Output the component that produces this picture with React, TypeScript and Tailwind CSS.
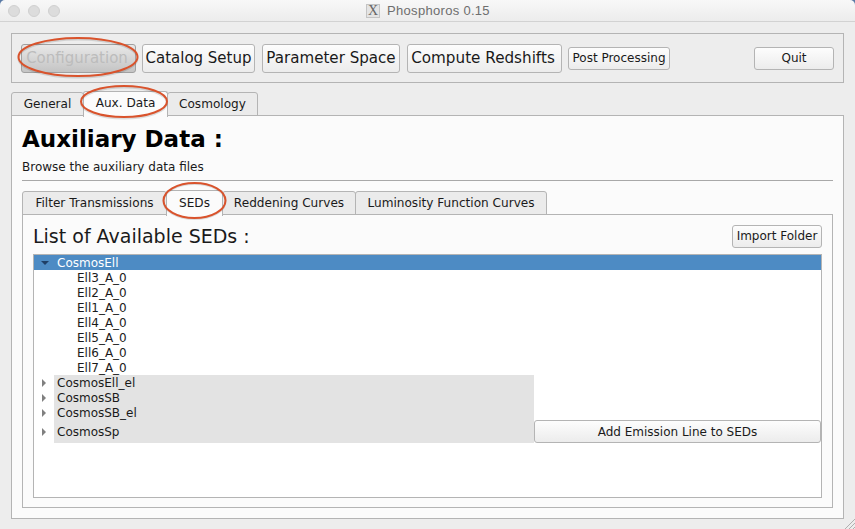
const btn = "flex items-center justify-center rounded-[3px] border border-[#b4b4b4] bg-gradient-to-b from-[#fdfdfd] to-[#ececec] text-[#1a1a1a] whitespace-nowrap";
const font = { fontFamily: '"DejaVu Sans", sans-serif' };

function Tab({ label, w, active, first, inner }: { label: string; w: number; active?: boolean; first?: boolean; inner?: boolean }) {
  return (
    <div
      style={{ width: w }}
      className={
        "flex items-center justify-center rounded-t-[3px] border border-[#b4b4b4] text-[12.1px] text-[#1a1a1a] whitespace-nowrap " +
        (active
          ? "relative z-10 -mb-px h-[26px] -mt-[2px] border-b-0 bg-[#fbfbfb] " + (inner ? "pb-[1px]" : "pb-[2px]")
          : "h-[24px] bg-[#ebebeb] " + (inner ? "pt-[1px]" : "")) +
        (first ? "" : " -ml-px")
      }
    >
      {label}
    </div>
  );
}

function Arrow({ open }: { open?: boolean }) {
  return (
    <svg width="8" height="8" viewBox="0 0 8 8" className="shrink-0">
      {open ? (
        <path d="M0 2 H8 L4 6 Z" fill="#1f3f66" />
      ) : (
        <path d="M2 0 L6 4 L2 8 Z" fill="#808080" />
      )}
    </svg>
  );
}

function Row({ label, h = 15, btnRow }: { label: string; h?: number; btnRow?: boolean }) {
  return (
    <div className="flex items-center" style={{ height: h }}>
      <div className="flex w-[20px] justify-end pr-[6px]"><Arrow /></div>
      <div className="flex h-full w-[480px] items-center bg-[#e3e3e3] pl-[3px]">{label}</div>
      {btnRow && <div className={btn + " h-full w-[287px]"}>Add Emission Line to SEDs</div>}
    </div>
  );
}

export default function App() {
  const children = ["Ell3_A_0", "Ell2_A_0", "Ell1_A_0", "Ell4_A_0", "Ell5_A_0", "Ell6_A_0", "Ell7_A_0"];
  return (
    <div style={font} className="relative flex h-[529px] w-[855px] flex-col overflow-hidden bg-[#5a7aa5] text-[12px] text-[#1a1a1a]">
      {/* title bar */}
      <div className="relative flex h-[22px] shrink-0 items-center justify-center rounded-t-[5px] border-b border-[#d2d2d2] bg-gradient-to-b from-[#f8f8f8] to-[#ececec]">
        <div className="absolute left-[8px] top-[5px] flex gap-[8px]">
          <div className="h-[12px] w-[12px] rounded-full border border-[#d0d0d0] bg-[#dcdcdc]" />
          <div className="h-[12px] w-[12px] rounded-full border border-[#d0d0d0] bg-[#dcdcdc]" />
          <div className="h-[12px] w-[12px] rounded-full border border-[#d0d0d0] bg-[#dcdcdc]" />
        </div>
        <div className="ml-[1px] flex items-center gap-[7px] pt-[1px]">
          <div style={{ fontFamily: '"Liberation Serif", serif' }} className="flex h-[14px] w-[14px] items-center justify-center border border-[#c4c4c4] bg-[#e4e4e4] text-[14px] leading-none text-[#666]">X</div>
          <span style={{ fontFamily: '"Liberation Sans", sans-serif' }} className="text-[13px] tracking-[0.3px] text-[#6e6e6e]">Phosphoros 0.15</span>
        </div>
      </div>

      <div className="flex flex-1 flex-col bg-[#ededed] px-[11px] pt-[11px]">
        {/* toolbar */}
        <div className="flex h-[50px] shrink-0 items-center border border-[#b4b4b4] pl-[9px] pr-[9px]">
          <div className="flex h-[29px] w-[115px] items-center justify-center rounded-[3px] border border-[#a0a0a0] bg-gradient-to-b from-[#e8e8e8] to-[#c4c4c4] pr-[3px] text-[15px] text-[#bcbcbc]">Configuration</div>
          <div className={btn + " ml-[6px] h-[29px] w-[113px] text-[15px]"}>Catalog Setup</div>
          <div className={btn + " ml-[7px] h-[29px] w-[138px] text-[15.1px]"}>Parameter Space</div>
          <div className={btn + " ml-[7px] h-[29px] w-[155px] pr-[3px] text-[15.2px]"}>Compute Redshifts</div>
          <div className={btn + " ml-[6px] h-[23px] w-[102px] text-[12px]"}>Post Processing</div>
          <div className={btn + " ml-auto h-[23px] w-[80px] text-[12px]"}>Quit</div>
        </div>

        {/* outer tabs */}
        <div className="mt-[9px] flex h-[24px] shrink-0 items-end">
          <Tab label="General" w={73} first />
          <Tab label="Aux. Data" w={85} active />
          <Tab label="Cosmology" w={91} />
        </div>

        {/* main panel */}
        <div className="-mt-px flex h-[404px] shrink-0 flex-col border border-[#b4b4b4] bg-[#fbfbfb] px-[10px]">
          <div className="mt-[9px] h-[28px] text-[23px] font-bold leading-[28px] text-black">Auxiliary Data :</div>
          <div className="mt-[7px] h-[15px] leading-[15px]">Browse the auxiliary data files</div>
          <div className="mt-[5px] h-px bg-[#a8a8a8]" />

          <div className="mt-[10px] flex h-[24px] shrink-0 items-end">
            <Tab label="Filter Transmissions" w={145} first inner />
            <Tab label="SEDs" w={57} active inner />
            <Tab label="Reddening Curves" w={134} inner />
            <Tab label="Luminosity Function Curves" w={192} inner />
          </div>

          <div className="-mt-px flex h-[294px] shrink-0 flex-col border border-[#b4b4b4] bg-[#fbfbfb] px-[10px]">
            <div className="flex h-[39px] shrink-0 items-center justify-between pt-[3px]">
              <span className="text-[19px] leading-none">List of Available SEDs :</span>
              <div className={btn + " h-[23px] w-[90px]"}>Import Folder</div>
            </div>
            <div className="h-[244px] shrink-0 border border-[#b4b4b4] bg-white">
              <div className="flex h-[15px] items-center bg-[#4d8bc4] text-white">
                <div className="flex w-[20px] justify-end pr-[5px]"><Arrow open /></div>
                <span className="pl-[3px]">CosmosEll</span>
              </div>
              {children.map((c) => (
                <div key={c} className="flex h-[15px] items-center pl-[43px]">{c}</div>
              ))}
              <Row label="CosmosEll_el" />
              <Row label="CosmosSB" />
              <Row label="CosmosSB_el" />
              <Row label="CosmosSp" h={23} btnRow />
            </div>
          </div>
        </div>
      </div>

      {/* resize grip */}
      <svg className="absolute bottom-0 right-0" width="12" height="12" viewBox="0 0 12 12">
        <path d="M2 12 L12 2 M6 12 L12 6 M10 12 L12 10" stroke="#b0b0b0" strokeWidth="1" fill="none" />
      </svg>

      {/* hand-drawn annotations */}
      <svg className="pointer-events-none absolute left-0 top-0 z-20" width="855" height="529">
        <g fill="none" stroke="#000" strokeOpacity="0.12" strokeWidth="2">
          <ellipse cx="78" cy="58.5" rx="59.5" ry="19" />
          <ellipse cx="124" cy="103" rx="43" ry="15.5" />
          <ellipse cx="194.5" cy="201.5" rx="31" ry="17.5" />
        </g>
        <g fill="none" stroke="#d9532c" strokeWidth="2">
          <ellipse cx="78" cy="57" rx="59.5" ry="19" />
          <ellipse cx="124" cy="101.5" rx="43" ry="15.5" />
          <ellipse cx="194.5" cy="200.5" rx="31" ry="17.5" />
        </g>
      </svg>
    </div>
  );
}
